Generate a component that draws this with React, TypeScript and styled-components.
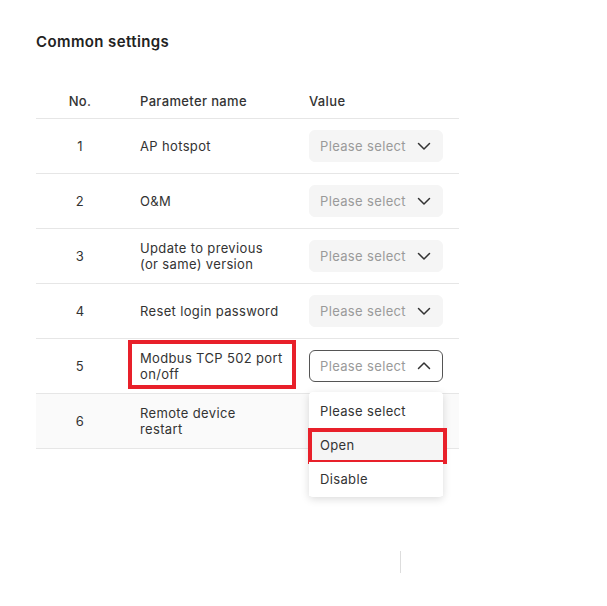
import React from "react";
import styled, { createGlobalStyle, css } from "styled-components";

const GlobalStyle = createGlobalStyle`
  body {
    margin: 0;
    background: #fff;
    font-family: "Inter", "Noto Sans", sans-serif;
    color: #333;
  }
`;

const TEXT = "#333333";
const MUTED = "#9a9a9a";
const LINE = "#e6e6e6";
const HIGHLIGHT = "#e8202a";

interface Row {
  no: number;
  name: React.ReactNode;
  open?: boolean;
  marked?: boolean;
}

const ROWS: Row[] = [
  { no: 1, name: "AP hotspot" },
  { no: 2, name: "O&M" },
  { no: 3, name: <>Update to previous<br />(or same) version</> },
  { no: 4, name: "Reset login password" },
  { no: 5, name: <>Modbus TCP 502 port<br />on/off</>, open: true, marked: true },
  { no: 6, name: <>Remote device<br />restart</> },
];

const OPTIONS = ["Please select", "Open", "Disable"];

function Chevron({ up }: { up?: boolean }) {
  return (
    <svg width="14" height="14" viewBox="0 0 14 14" fill="none">
      <path
        d={up ? "M1.5 9.5L7 4L12.5 9.5" : "M1.5 4.5L7 10L12.5 4.5"}
        stroke={TEXT}
        strokeWidth="1.5"
        strokeLinecap="round"
        strokeLinejoin="round"
      />
    </svg>
  );
}

function Select({ open }: { open?: boolean }) {
  return (
    <SelectWrap>
      <SelectBox open={open}>
        <Placeholder>Please select</Placeholder>
        <Chevron up={open} />
      </SelectBox>
      {open && (
        <Menu>
          {OPTIONS.map((opt) => (
            <MenuItem key={opt} active={opt === "Open"}>
              {opt}
            </MenuItem>
          ))}
        </Menu>
      )}
    </SelectWrap>
  );
}

export default function App() {
  return (
    <>
      <GlobalStyle />
      <Page>
        <Title>Common settings</Title>
        <Table>
          <thead>
            <tr>
              <HeadCell center>No.</HeadCell>
              <HeadCell>Parameter name</HeadCell>
              <HeadCell>Value</HeadCell>
            </tr>
          </thead>
          <tbody>
            {ROWS.map((row) => (
              <BodyRow key={row.no} shaded={row.no === 6}>
                <Cell center>{row.no}</Cell>
                <Cell>
                  <NameText marked={row.marked}>{row.name}</NameText>
                </Cell>
                <Cell>
                  <Select open={row.open} />
                </Cell>
              </BodyRow>
            ))}
          </tbody>
        </Table>
        <Footer>
          <Divider />
        </Footer>
      </Page>
    </>
  );
}

const Page = styled.div`
  width: 607px;
  height: 606px;
  box-sizing: border-box;
  padding: 33px 0 0 36px;
`;

const Title = styled.h2`
  margin: 0;
  font-size: 15px;
  font-weight: 600;
  line-height: 18px;
  letter-spacing: 0.4px;
  color: #222;
`;

const Table = styled.table`
  margin-top: 32px;
  width: 423px;
  border-collapse: collapse;
  font-size: 13px;
  letter-spacing: 0.35px;
  table-layout: fixed;

  th:nth-child(1),
  td:nth-child(1) {
    width: 56px;
  }
  th:nth-child(2),
  td:nth-child(2) {
    width: 137px;
  }
`;

const HeadCell = styled.th<{ center?: boolean }>`
  height: 35px;
  padding: 0 16px;
  font-weight: 500;
  color: ${TEXT};
  text-align: ${({ center }) => (center ? "center" : "left")};
  border-bottom: 1px solid ${LINE};
  vertical-align: middle;
`;

const BodyRow = styled.tr<{ shaded?: boolean }>`
  background: ${({ shaded }) => (shaded ? "#fafafa" : "#fff")};
`;

const Cell = styled.td<{ center?: boolean }>`
  height: 54px;
  padding: 0 16px;
  color: ${TEXT};
  line-height: 16px;
  text-align: ${({ center }) => (center ? "center" : "left")};
  border-bottom: 1px solid ${LINE};
  vertical-align: middle;
`;

const NameText = styled.div<{ marked?: boolean }>`
  position: relative;
  white-space: nowrap;
  ${({ marked }) =>
    marked &&
    css`
      &::after {
        content: "";
        position: absolute;
        left: -12px;
        top: -10px;
        width: 168px;
        height: 49px;
        border: 4px solid ${HIGHLIGHT};
        box-sizing: border-box;
      }
    `}
`;

const SelectWrap = styled.div`
  position: relative;
  width: 134px;
`;

const SelectBox = styled.div<{ open?: boolean }>`
  display: flex;
  align-items: center;
  justify-content: space-between;
  box-sizing: border-box;
  height: 32px;
  padding: 0 11px 0 10px;
  border-radius: 6px;
  background: ${({ open }) => (open ? "#fff" : "#f5f5f5")};
  border: 1px solid ${({ open }) => (open ? "#555" : "#f5f5f5")};
`;

const Placeholder = styled.span`
  color: ${MUTED};
  font-size: 13px;
`;

const Menu = styled.div`
  position: absolute;
  top: 42px;
  left: 0;
  width: 134px;
  padding: 2px 0 1px;
  background: #fff;
  border-radius: 4px;
  box-shadow: 0 2px 8px rgba(0, 0, 0, 0.15);
  z-index: 2;
`;

const MenuItem = styled.div<{ active?: boolean }>`
  position: relative;
  height: 34px;
  line-height: 34px;
  padding: 0 11px;
  font-size: 13px;
  color: ${TEXT};
  background: ${({ active }) => (active ? "#f5f5f5" : "#fff")};
  ${({ active }) =>
    active &&
    css`
      &::after {
        content: "";
        position: absolute;
        left: -1px;
        top: 0;
        right: -4px;
        bottom: -2px;
        border: 4px solid ${HIGHLIGHT};
      }
    `}
`;

const Footer = styled.div`
  display: flex;
  padding: 102px 0 0 364px;
`;

const Divider = styled.div`
  width: 1px;
  height: 22px;
  background: #ddd;
`;
